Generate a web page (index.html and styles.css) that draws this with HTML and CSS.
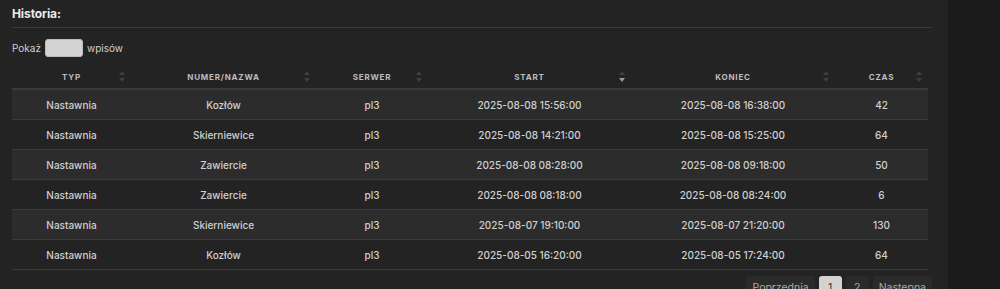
FILE: index.html
```html
<!DOCTYPE html>
<html lang="pl">
<head>
<meta charset="utf-8">
<link rel="stylesheet" href="styles.css">
</head>
<body>
<div class="page">
  <section class="panel">
    <h2 class="title">Historia:</h2>
    <div class="length">
      <span>Pokaż</span>
      <span class="select"></span>
      <span>wpisów</span>
    </div>
    <table class="grid">
      <colgroup>
        <col class="c1"><col class="c2"><col class="c3"><col class="c4"><col class="c5"><col class="c6">
      </colgroup>
      <thead>
        <tr>
          <th>TYP<span class="sort"></span></th>
          <th>NUMER/NAZWA<span class="sort"></span></th>
          <th>SERWER<span class="sort"></span></th>
          <th>START<span class="sort desc"></span></th>
          <th>KONIEC<span class="sort"></span></th>
          <th>CZAS<span class="sort"></span></th>
        </tr>
      </thead>
      <tbody>
        <tr><td>Nastawnia</td><td>Kozłów</td><td>pl3</td><td>2025-08-08 15:56:00</td><td>2025-08-08 16:38:00</td><td>42</td></tr>
        <tr><td>Nastawnia</td><td>Skierniewice</td><td>pl3</td><td>2025-08-08 14:21:00</td><td>2025-08-08 15:25:00</td><td>64</td></tr>
        <tr><td>Nastawnia</td><td>Zawiercie</td><td>pl3</td><td>2025-08-08 08:28:00</td><td>2025-08-08 09:18:00</td><td>50</td></tr>
        <tr><td>Nastawnia</td><td>Zawiercie</td><td>pl3</td><td>2025-08-08 08:18:00</td><td>2025-08-08 08:24:00</td><td>6</td></tr>
        <tr><td>Nastawnia</td><td>Skierniewice</td><td>pl3</td><td>2025-08-07 19:10:00</td><td>2025-08-07 21:20:00</td><td>130</td></tr>
        <tr><td>Nastawnia</td><td>Kozłów</td><td>pl3</td><td>2025-08-05 16:20:00</td><td>2025-08-05 17:24:00</td><td>64</td></tr>
      </tbody>
    </table>
    <div class="pager">
      <span class="pbtn">Poprzednia</span>
      <span class="pbtn num active">1</span>
      <span class="pbtn num">2</span>
      <span class="pbtn">Następna</span>
    </div>
  </section>
</div>
</body>
</html>
```
FILE: styles.css
```css
html, body {
  margin: 0;
  padding: 0;
  background: #1b1b1c;
  font-family: Inter, "Noto Sans", sans-serif;
  color: #d2d2d2;
}
.page {
  display: flex;
  height: 289px;
  overflow: hidden;
}
.panel {
  width: 920px;
  padding: 0 16px 0 12px;
  background: #232323;
}
.title {
  margin: 0;
  padding-top: 4px;
  height: 23px;
  line-height: 20px;
  font-size: 12px;
  letter-spacing: -0.1px;
  font-weight: 700;
  color: #ececec;
  border-bottom: 1px solid #393939;
}
.length {
  display: flex;
  align-items: center;
  gap: 4px;
  margin-top: 11px;
  height: 18px;
  font-size: 10px;
  color: #cfcfcf;
}
.select {
  width: 38px;
  height: 18px;
  box-sizing: border-box;
  background: #d3d3d3;
  border: 1px solid #bdbdbd;
  border-radius: 3px;
}
.grid {
  width: 916px;
  margin-top: 8px;
  border-collapse: collapse;
  table-layout: fixed;
}
.c1 { width: 119px; }
.c2 { width: 185px; }
.c3 { width: 112px; }
.c4 { width: 203px; }
.c5 { width: 204px; }
.c6 { width: 93px; }
.grid th {
  position: relative;
  height: 23px;
  padding: 0;
  font-size: 8px;
  font-weight: 700;
  letter-spacing: 0.8px;
  color: #bdbdbd;
  text-align: center;
  border-bottom: 2px solid #3a3a3a;
}
.sort {
  position: absolute;
  right: 6px;
  top: 6px;
  width: 6px;
  height: 11px;
}
.sort::before, .sort::after {
  content: "";
  position: absolute;
  left: 0;
  border-left: 3px solid transparent;
  border-right: 3px solid transparent;
}
.sort::before {
  top: 0;
  border-bottom: 4px solid #3f3f3f;
}
.sort::after {
  bottom: 0;
  border-top: 4px solid #3f3f3f;
}
.sort.desc::after {
  border-top-color: #9a9a9a;
}
.grid td {
  height: 29px;
  padding: 0;
  font-size: 10px;
  font-weight: 500;
  text-align: center;
  color: #d0d0d0;
  border-bottom: 1px solid #3a3a3a;
}
.grid tbody tr:nth-child(odd) td {
  background: #2c2c2c;
}
.pager {
  display: flex;
  justify-content: flex-end;
  gap: 4px;
  margin-top: 6px;
  font-size: 10.5px;
}
.pbtn {
  padding: 5px 6px;
  border-radius: 3px;
  background: #2a2a2a;
  color: #a8a8a8;
}
.pbtn.num {
  width: 23px;
  box-sizing: border-box;
  padding: 5px 0;
  text-align: center;
}
.pbtn.active {
  background: #d3d3d3;
  color: #333;
}
```
